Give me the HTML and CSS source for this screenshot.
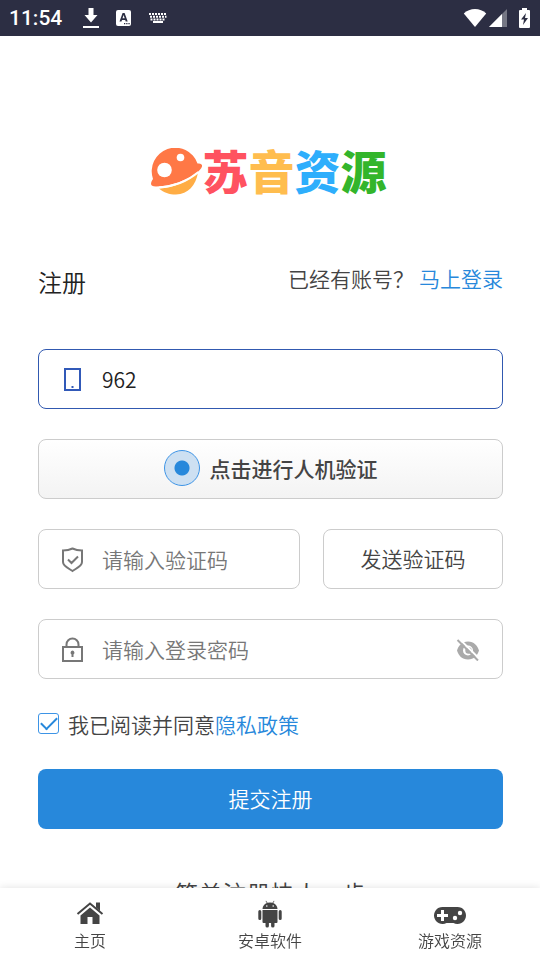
FILE: index.html
```html
<!DOCTYPE html>
<html lang="zh-CN">
<head>
<meta charset="utf-8">
<meta name="viewport" content="width=device-width, initial-scale=1">
<title>注册 - 苏音资源</title>
<link rel="stylesheet" href="styles.css">
</head>
<body>
<header class="status">
  <time class="clock">11:54</time>
  <svg class="status-icon" width="16" height="20" viewBox="0 0 16 20"><path d="M5.500 0h5v7h4L8 14.500 1.500 7h4zM0 18h16v2H0z"/></svg>
  <svg class="status-icon" width="16" height="16" viewBox="0 0 16 16"><rect width="15" height="16" rx="2"/><path class="cut" d="M3.500 11.500 6.600 3h2l3.100 8.500H9.700L9.200 10H6l-.5 1.500zM6.500 8.300h2.200L7.600 5zM8 13h1.300v1.300H8zM10.200 13h1.300v1.300h-1.300zM12.400 13h1.300v1.300h-1.300z"/></svg>
  <svg class="status-icon" width="19" height="10" viewBox="0 0 19 10"><path class="keys" d="M0 1h18"/><path class="keys" d="M1 3.700h16.500M1.500 6.400h15"/><path d="M4 8h10v2H4z"/></svg>
  <span class="status-right">
    <svg width="24" height="18" viewBox="0 0 24 18"><path d="M12 18 .8 4.500C3.500 1.500 8 0 12 0s8.500 1.500 11.200 4.500z"/></svg>
    <svg width="18" height="18" viewBox="0 0 18 18"><path d="M18 0v18H0z" opacity=".35"/><path d="M13 5v13H0z"/></svg>
    <svg class="battery" width="11" height="20" viewBox="0 0 11 20"><path d="M3 0h5v2h2q1 0 1 1v16q0 1-1 1H1q-1 0-1-1V3q0-1 1-1h2z"/><path class="cut" d="M7 5 2 11.500h3L4 17l5-7H6z"/></svg>
  </span>
</header>
<main class="page">
  <a class="logo" href="#" aria-label="苏音资源">
    <svg width="52" height="48" viewBox="0 0 52 48">
      <path class="planet-low" d="M8 40.500C22 40 38 33 47 24.500 45 37 37 46.500 25 46.500c-7 0-12-2-17-6z"/>
      <path class="planet" d="M2 31A23.500 23.500 0 0 1 46.500 15.500c3.500-.5 5 1 4.500 3C48 27 24 38.500 5 38.500c-6 0-6-3-3-7.500z"/>
      <path class="rim" d="M8 39.500C24 38.500 38 32 47.500 24"/>
      <circle class="crater" cx="13.500" cy="22" r="7.300"/><circle class="crater" cx="29.500" cy="9.500" r="3.800"/>
    </svg>
    <span class="logo-text"><span class="c1">苏</span><span class="c2">音</span><span class="c3">资</span><span class="c4">源</span></span>
  </a>
  <div class="heading">
    <h1>注册</h1>
    <p>已经有账号？<a href="#">马上登录</a></p>
  </div>
  <form class="form">
    <label class="field active">
      <svg width="24" height="28" viewBox="0 -1 24 28"><rect x="4" y="3" width="15" height="21"/><path class="solid" d="M10.500 20h2v2h-2z"/></svg>
      <input type="text" value="962" aria-label="手机号">
    </label>
    <button class="captcha" type="button"><span class="radar"></span>点击进行人机验证</button>
    <div class="row">
      <label class="field">
        <svg width="24" height="28" viewBox="0 -1 24 28"><path d="M11.500 2.500C8.500 4 5.500 4.500 2 4.500V16c0 4 5 6 9.500 9 4.500-3 9.500-5 9.500-9V4.500c-3.500 0-6.500-.5-9.500-2zM7 13.500l3.500 3.500 6.500-6.500"/></svg>
        <input type="text" placeholder="请输入验证码" aria-label="验证码">
      </label>
      <button class="send" type="button">发送验证码</button>
    </div>
    <label class="field">
      <svg width="24" height="28" viewBox="0 -1 24 28"><path d="M2 11h19v14H2zM5.500 11V8.500a6 6 0 0 1 12 0V11"/><path class="solid" d="M11.500 14.500a2.200 2.200 0 0 1 1 4V21h-2v-2.500a2.200 2.200 0 0 1 1-4z"/></svg>
      <input type="password" placeholder="请输入登录密码" aria-label="登录密码">
      <button class="eye" type="button" aria-label="显示密码">
        <svg width="24" height="24" viewBox="0 -2 24 24"><path class="solid" fill-rule="evenodd" d="M12 2.500C6 2.500 2.500 6.500 1 11.500c1.500 5 5 9 11 9s9.500-4 11-9c-1.500-5-5-9-11-9zm0 4a5 5 0 1 1 0 10 5 5 0 0 1 0-10z"/><circle class="solid" cx="12.500" cy="11.500" r="3.200"/><path class="gap" d="M3 -.5 24 20.500"/><path class="slash" d="M1.500 1 22 21.500"/></svg>
      </button>
    </label>
    <div class="agree">
      <input type="checkbox" id="agree" checked>
      <label for="agree">我已阅读并同意</label><a href="#">隐私政策</a>
    </div>
    <button class="submit" type="submit">提交注册</button>
  </form>
  <h2 class="slogan">简单注册快人一步</h2>
</main>
<nav class="tabs">
  <a href="#"><svg width="28" height="28" viewBox="0 0 28 28"><path d="M14 8.500 23.500 16.500v8.500H16.500v-7h-5v7H4.500v-8.500z"/><path class="roof" d="M1.500 15 14 4.500 26.500 15"/><path d="M20 3.500h4V12l-4-3.500z"/></svg>主页</a>
  <a href="#"><svg width="28" height="28" viewBox="0 0 28 28"><path d="M6.500 10a7.500 7 0 0 1 4.300-6L9.500 2l.6-.3L11.500 3.800q2.500-.8 5 0l1.400-2.100.6.300-1.300 2a7.500 7 0 0 1 4.300 6zM6.500 11h15v12q0 1-1 1h-2v3q0 1.500-1.700 1.500t-1.700-1.500v-3h-2.200v3q0 1.500-1.700 1.500t-1.700-1.500v-3h-2q-1 0-1-1zM2.300 12.500q0-1.500 1.500-1.500t1.500 1.500v7q0 1.500-1.500 1.500t-1.500-1.500zM22.700 12.500q0-1.500 1.500-1.500t1.500 1.500v7q0 1.500-1.500 1.500t-1.500-1.500z"/><circle class="hole" cx="10.800" cy="7" r=".8"/><circle class="hole" cx="17.200" cy="7" r=".8"/></svg>安卓软件</a>
  <a href="#"><svg width="32" height="28" viewBox="0 -1 32 28"><path d="M8.500 7h15a8.500 8.500 0 1 1-4 16h-7a8.500 8.500 0 1 1-4-16z"/><path class="hole" d="M7 10h3v4h4v3h-4v4H7v-4H3v-3h4z"/><circle class="hole" cx="21" cy="18" r="2.200"/><circle class="hole" cx="26" cy="13" r="2.200"/></svg>游戏资源</a>
</nav>
</body>
</html>
```
FILE: styles.css
```css
* { box-sizing: border-box; }
html { scrollbar-width: none; }
body {
  margin: 0;
  background: #fff;
  color: #444;
  font-family: "Noto Sans CJK SC", sans-serif;
  font-size: 21px;
  font-weight: 350;
  line-height: 28px;
}
a { color: #2788db; text-decoration: none; }
button, input { font: inherit; color: inherit; margin: 0; }
button { cursor: pointer; }

.status {
  display: flex;
  align-items: center;
  gap: 17px;
  height: 36px;
  padding: 0 10px 0 9px;
  background: #2c2e43;
  color: #fff;
}
.status svg { fill: #fff; }
.status .cut { fill: #2c2e43; }
.status .keys { stroke: #fff; stroke-width: 2; stroke-dasharray: 2 1; }
.clock { font: 500 21px/36px Roboto, sans-serif; margin-right: 4px; }
.status-right { display: flex; align-items: center; gap: 2px; margin-left: auto; }
.battery { margin-left: 10px; }

.page { padding: 107px 37px 90px 38px; }
.logo { display: flex; justify-content: center; height: 54px; padding-right: 4px; }
.logo svg { flex: none; margin-top: 5px; }
.logo-text { font-size: 46px; line-height: 52px; font-weight: 900; }
.planet { fill: #ff7846; }
.planet-low { fill: #ffad45; }
.rim { fill: none; stroke: #fff; stroke-width: 2; }
.crater { fill: #fff; }
.c1 { color: #ff5260; }
.c2 { color: #ffbd4e; }
.c3 { color: #2eaefc; }
.c4 { color: #33b52b; }

.heading { display: flex; justify-content: space-between; margin-top: 67px; }
.heading h1 { margin: 4px 0 0; font-size: 24px; line-height: 28px; font-weight: 350; color: #222; }
.heading p { margin: 0; }
.heading a { margin-left: 5px; }

.form { display: flex; flex-direction: column; gap: 30px; margin-top: 53px; }
.field {
  display: flex;
  align-items: center;
  gap: 17px;
  height: 60px;
  padding: 0 22px;
  border: 1px solid #ccc;
  border-radius: 8px;
  color: #777;
}
.field svg { flex: none; fill: none; stroke: currentColor; stroke-width: 2; }
.field .solid { fill: currentColor; stroke: none; }
.field input { flex: 1; min-width: 0; width: 0; padding: 0; border: 0; outline: 0; background: none; color: #222; }
.field input::placeholder { color: #777; opacity: 1; }
.field.active { border-color: #3159b0; color: #3159b8; }
.eye { display: flex; padding: 0; border: 0; background: none; color: #aaa; }
.field .gap { stroke: #fff; }

.captcha {
  display: flex;
  align-items: center;
  justify-content: center;
  gap: 10px;
  height: 60px;
  padding: 0 0 2px;
  border: 1px solid #ccc;
  border-radius: 8px;
  background: linear-gradient(#fff, #f3f3f3);
  font-weight: 500;
}
.radar {
  width: 36px;
  height: 36px;
  border: 1px solid #3d94e6;
  border-radius: 50%;
  background: radial-gradient(circle, #2788db 7px, #cde0f2 8px);
}
.row { display: grid; grid-template-columns: 262fr 180fr; gap: 23px; }
.send { height: 60px; padding: 0 0 2px; border: 1px solid #ccc; border-radius: 8px; background: #fff; }

.agree { display: flex; align-items: center; height: 30px; padding-bottom: 1px; }
.agree input {
  appearance: none;
  width: 21px;
  height: 21px;
  margin-right: 9px;
  border: 1px solid #3d94e6;
  border-radius: 3px;
  display: grid;
  place-items: center;
}
.agree input:checked::before {
  content: "";
  width: 14px;
  height: 7px;
  margin-bottom: 4px;
  border: solid #2788db;
  border-width: 0 0 2px 2px;
  transform: rotate(-45deg);
}
.submit { height: 60px; padding: 0 0 2px; border: 0; border-radius: 8px; background: #2788db; color: #fff; }
.slogan { margin: 50px 0 0; text-align: center; font-size: 24px; line-height: 28px; font-weight: 350; }

.tabs {
  position: fixed;
  inset: auto 0 0;
  display: grid;
  grid-template-columns: repeat(3, 1fr);
  height: 72px;
  padding-top: 11px;
  background: #fff;
  box-shadow: 0 0 8px rgba(0, 0, 0, .12);
}
.tabs a { display: flex; flex-direction: column; align-items: center; color: #444; font-size: 16px; line-height: 26px; }
.tabs svg { fill: #444; overflow: visible; }
.tabs .hole { fill: #fff; }
.tabs .roof { fill: none; stroke: #444; stroke-width: 2; }
```
